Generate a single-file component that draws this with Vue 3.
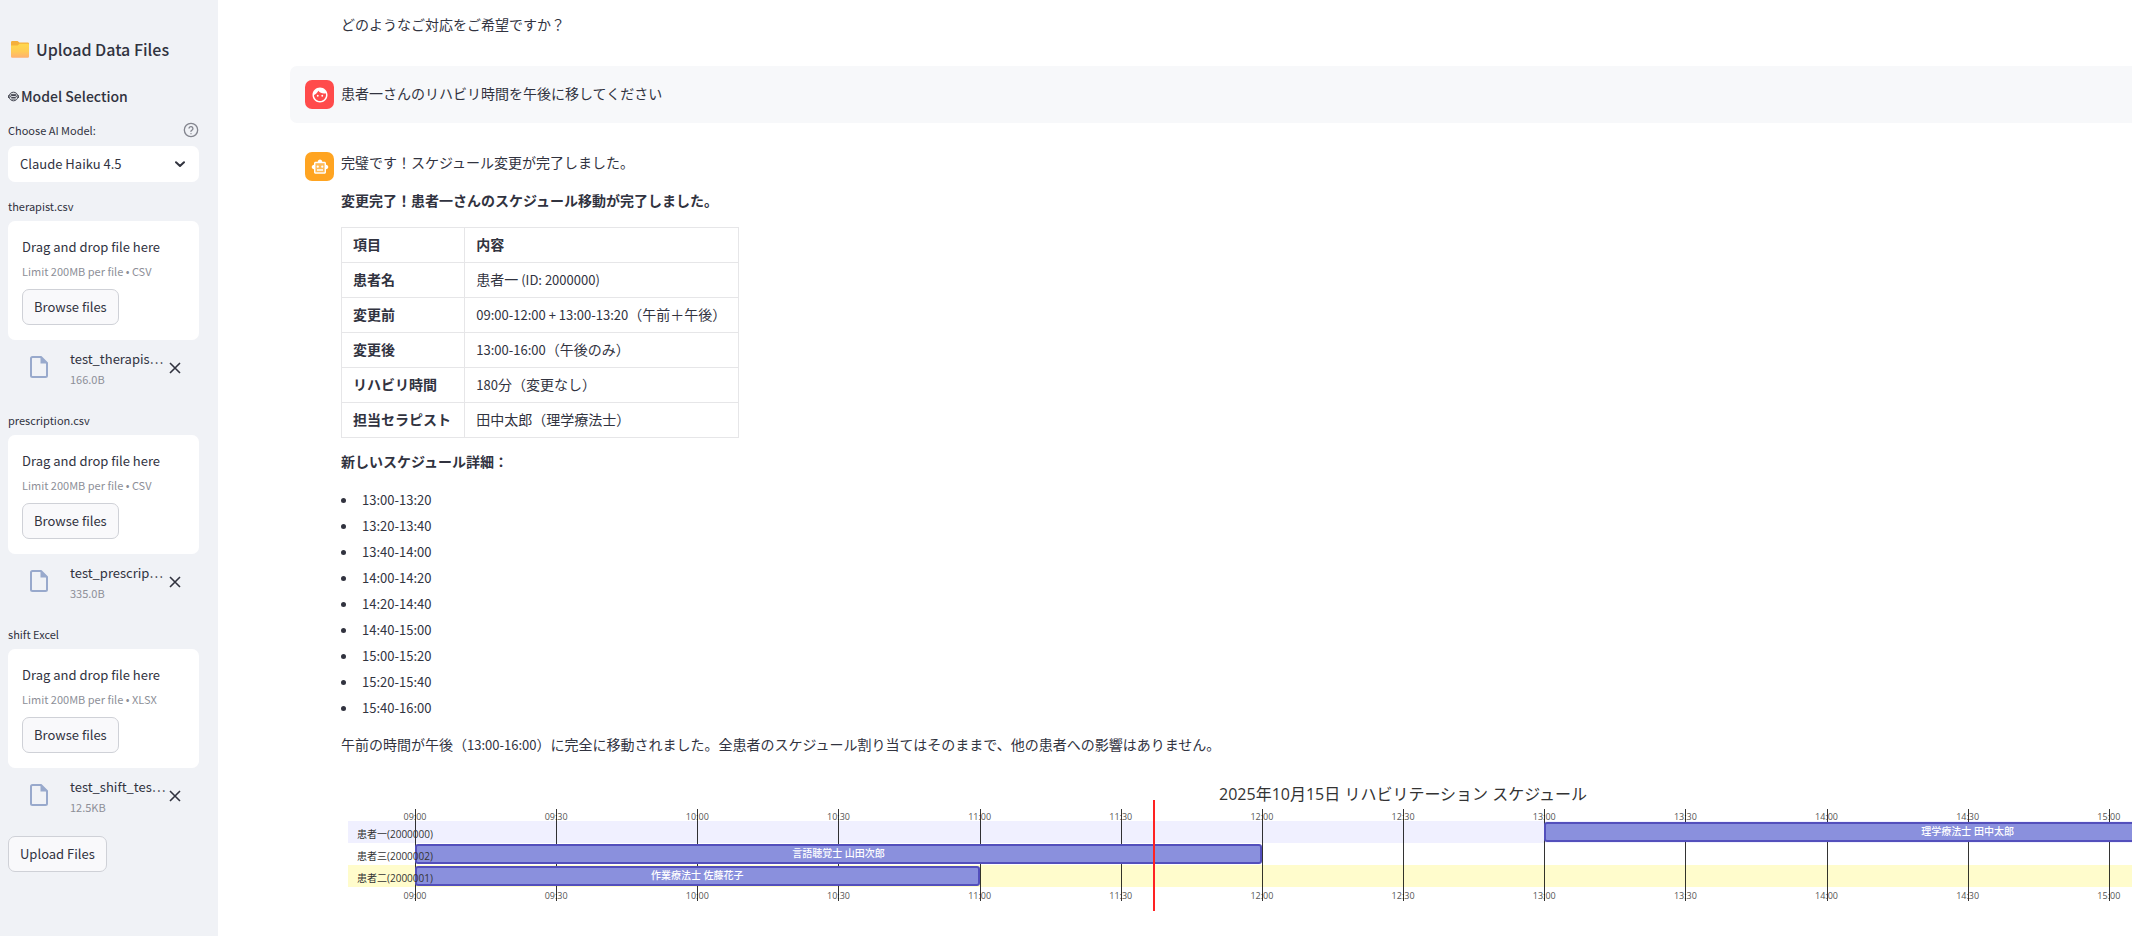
<script setup>
import { ref } from 'vue'

const model = ref('Claude Haiku 4.5')

const uploads = [
  { id: 'therapist', label: 'therapist.csv', type: 'CSV', file: 'test_therapis…', size: '166.0B' },
  { id: 'prescription', label: 'prescription.csv', type: 'CSV', file: 'test_prescrip…', size: '335.0B' },
  { id: 'shift', label: 'shift Excel', type: 'XLSX', file: 'test_shift_tes…', size: '12.5KB' },
]

// Each cell is a list of runs; runs flagged as latin use the smaller latin size.
const rows = [
  { key: '患者名', runs: [{ t: '患者一' }, { t: ' (ID: 2000000)', latin: true }] },
  { key: '変更前', runs: [{ t: '09:00-12:00 + 13:00-13:20', latin: true }, { t: '（午前＋午後）' }] },
  { key: '変更後', runs: [{ t: '13:00-16:00', latin: true }, { t: '（午後のみ）' }] },
  { key: 'リハビリ時間', runs: [{ t: '180', latin: true }, { t: '分（変更なし）' }] },
  { key: '担当セラピスト', runs: [{ t: '田中太郎（理学療法士）' }] },
]

const slots = [
  '13:00-13:20', '13:20-13:40', '13:40-14:00', '14:00-14:20', '14:20-14:40',
  '14:40-15:00', '15:00-15:20', '15:20-15:40', '15:40-16:00',
]

const DAY_START = 9
const DAY_HOURS = 7
const pct = (hour) => ((hour - DAY_START) / DAY_HOURS) * 100 + '%'
const span = (hours) => (hours / DAY_HOURS) * 100 + '%'

const ticks = Array.from({ length: 13 }, (_, i) => {
  const h = DAY_START + i / 2
  return { h, text: String(Math.floor(h)).padStart(2, '0') + (i % 2 ? ':30' : ':00') }
})

const sections = [
  { name: '患者一(2000000)', tone: 'lilac', from: 13, hours: 3, task: '理学療法士 田中太郎' },
  { name: '患者三(2000002)', tone: 'plain', from: 9, hours: 3, task: '言語聴覚士 山田次郎' },
  { name: '患者二(2000001)', tone: 'lemon', from: 9, hours: 2, task: '作業療法士 佐藤花子' },
]
const now = 11.615
</script>

<template>
  <div class="app">
    <aside class="sidebar">
      <h2 class="side-title">
        <svg width="20" height="20" viewBox="0 0 20 20" aria-hidden="true">
          <defs>
            <linearGradient id="folder" x1="0" y1="0" x2="0" y2="1">
              <stop offset="0" stop-color="#ffd84d" />
              <stop offset="0.55" stop-color="#ffcb55" />
              <stop offset="1" stop-color="#ffb070" />
            </linearGradient>
          </defs>
          <path d="M1 3.2Q1 2 2.2 2H7.6L9.4 3.6H17.8Q19 3.6 19 4.8V10H1z" fill="#f5b03c" />
          <path d="M1 6.4H7.6L9.4 4.8H17.8Q19 4.8 19 6V17.6Q19 18.8 17.8 18.8H2.2Q1 18.8 1 17.6z" fill="url(#folder)" />
        </svg>
        <span>Upload Data Files</span>
      </h2>
      <h3 class="side-subtitle">
        <svg width="11" height="11" viewBox="0 0 11 11" fill="none" stroke="#31333f" aria-hidden="true">
          <ellipse cx="5.5" cy="5.5" rx="4.4" ry="4.3" stroke-width="0.9" />
          <path d="M.5 4.2V7M10.5 4.2V7M2.6 3.4H8.4" stroke-width="0.8" />
          <rect x="2.6" y="4.4" width="5.8" height="2" rx="1" stroke-width="1" />
          <path d="M3.3 8H7.7" stroke-width="0.9" />
        </svg>
        <span>Model Selection</span>
      </h3>

      <div class="label-row">
        <label for="model">Choose AI Model:</label>
        <svg width="16" height="16" viewBox="0 0 24 24" fill="none" stroke="#83858e" stroke-width="2" stroke-linecap="round" stroke-linejoin="round" aria-hidden="true">
          <circle cx="12" cy="12" r="10" />
          <path d="M9.09 9a3 3 0 0 1 5.83 1c0 2-3 2.5-3 4M12 17.500h.01" />
        </svg>
      </div>
      <div class="select-box">
        <select id="model" v-model="model">
          <option>Claude Haiku 4.5</option>
        </select>
        <svg class="chevron" width="10" height="7" viewBox="0 0 10 7" fill="none" stroke="#31333f" stroke-width="2" aria-hidden="true">
          <path d="M1 1.2L5 5L9 1.2" stroke-linecap="round" stroke-linejoin="round" />
        </svg>
      </div>

      <section v-for="u in uploads" :key="u.id" class="upload">
        <label class="upload-label" :for="u.id">{{ u.label }}</label>
        <div class="dropzone">
          <span class="drop-text">Drag and drop file here</span>
          <span class="limit">Limit 200MB per file • {{ u.type }}</span>
          <input :id="u.id" class="file-input" type="file" tabindex="-1" />
          <button type="button" class="btn">Browse files</button>
        </div>
        <div class="file">
          <svg class="file-icon" width="18" height="22" viewBox="0 0 18 22" aria-hidden="true">
            <path d="M2.5 1H11L17 7V19.5Q17 21 15.5 21H2.5Q1 21 1 19.5V2.5Q1 1 2.5 1z" fill="none" stroke="#98a9cc" stroke-width="2" stroke-linejoin="round" />
            <path d="M10.5 1V7.5H17z" fill="#98a9cc" />
          </svg>
          <div class="file-info">
            <span class="file-name">{{ u.file }}</span>
            <span class="file-size">{{ u.size }}</span>
          </div>
          <button type="button" class="remove" :aria-label="'Remove ' + u.file">
            <svg width="12" height="12" viewBox="0 0 12 12" stroke="#31333f" stroke-width="1.6" aria-hidden="true">
              <path d="M1 1L11 11M11 1L1 11" />
            </svg>
          </button>
        </div>
      </section>

      <button type="button" class="btn upload-btn">Upload Files</button>
    </aside>

    <main class="main">
      <p class="previous">どのようなご対応をご希望ですか？</p>

      <div class="message user">
        <div class="avatar red">
          <svg width="18" height="18" viewBox="0 0 24 24" fill="#fff" aria-hidden="true">
            <path d="M10.25 13a1.25 1.25 0 1 1-2.5 0a1.25 1.25 0 1 1 2.5 0zM15 11.75a1.25 1.25 0 1 0 0 2.5a1.25 1.25 0 0 0 0-2.5zM22 12c0 5.52-4.48 10-10 10S2 17.52 2 12S6.48 2 12 2s10 4.48 10 10zM20 12c0-.78-.12-1.53-.33-2.24c-.7.15-1.42.24-2.17.24c-3.13 0-5.92-1.44-7.76-3.69C8.69 8.87 6.6 10.88 4 11.86c.01.04 0 .09 0 .14c0 4.41 3.59 8 8 8s8-3.59 8-8z" />
          </svg>
        </div>
        <p>患者一さんのリハビリ時間を午後に移してください</p>
      </div>

      <div class="message assistant">
        <div class="avatar orange">
          <svg width="18" height="18" viewBox="0 0 24 24" fill="#fff" aria-hidden="true">
            <path d="M6 7h12v12H6z" fill-opacity="0.25" />
            <path fill-rule="evenodd" d="M20 9V7c0-1.1-.9-2-2-2h-3c0-1.66-1.34-3-3-3S9 3.34 9 5H6c-1.1 0-2 .9-2 2v2c-1.66 0-3 1.34-3 3s1.34 3 3 3v4c0 1.1.9 2 2 2h12c1.1 0 2-.9 2-2v-4c1.66 0 3-1.34 3-3s-1.34-3-3-3zM18 19H6V7h12v12zM9 13a1.5 1.5 0 1 0 0-3a1.5 1.5 0 0 0 0 3zM15 13a1.5 1.5 0 1 0 0-3a1.5 1.5 0 0 0 0 3zM8 15h8v2H8z" />
          </svg>
        </div>
        <div class="answer">
          <p>完璧です！スケジュール変更が完了しました。</p>
          <p class="lead"><strong>変更完了！患者一さんのスケジュール移動が完了しました。</strong></p>

          <table>
            <thead>
              <tr><th scope="col">項目</th><th scope="col">内容</th></tr>
            </thead>
            <tbody>
              <tr v-for="r in rows" :key="r.key">
                <th scope="row">{{ r.key }}</th>
                <td><span v-for="(run, i) in r.runs" :key="i" :class="{ latin: run.latin }">{{ run.t }}</span></td>
              </tr>
            </tbody>
          </table>

          <p class="detail"><strong>新しいスケジュール詳細：</strong></p>
          <ul>
            <li v-for="s in slots" :key="s">{{ s }}</li>
          </ul>
          <p>午前の時間が午後（<span class="latin">13:00-16:00</span>）に完全に移動されました。全患者のスケジュール割り当てはそのままで、他の患者への影響はありません。</p>

          <figure class="gantt">
            <figcaption>2025年10月15日 リハビリテーション スケジュール</figcaption>
            <div class="plot">
              <div class="bands">
                <div v-for="s in sections" :key="s.name" class="band" :class="s.tone"></div>
              </div>
              <div class="axis">
                <div v-for="t in ticks" :key="t.h" class="tick" :style="{ left: pct(t.h) }">
                  <span>{{ t.text }}</span>
                  <span>{{ t.text }}</span>
                </div>
              </div>
              <div class="lanes">
                <div v-for="s in sections" :key="s.name" class="lane">
                  <div class="bar" :style="{ left: pct(s.from), width: span(s.hours) }">{{ s.task }}</div>
                </div>
                <div class="now" :style="{ left: pct(now) }"></div>
              </div>
              <div class="names">
                <span v-for="s in sections" :key="s.name">{{ s.name }}</span>
              </div>
            </div>
          </figure>
        </div>
      </div>
    </main>
  </div>
</template>

<style>
body {
  margin: 0;
  background: #fff;
}
</style>

<style scoped>
.app {
  display: flex;
  min-height: 100vh;
  overflow: hidden;
  color: #31333f;
  font-family: "Noto Sans CJK JP", "Noto Sans", sans-serif;
  font-size: 14px;
  line-height: 24px;
}

* {
  box-sizing: border-box;
}

p, h2, h3, ul, figure {
  margin: 0;
  padding: 0;
}

button, select {
  font: inherit;
  color: inherit;
}

/* Sidebar */
.sidebar {
  flex: none;
  width: 218px;
  padding: 37px 19px 0 8px;
  background: #f0f2f6;
  font-size: 13px;
}

.side-title {
  display: flex;
  align-items: center;
  gap: 6px;
  padding-left: 2px;
  font-size: 16px;
  font-weight: 500;
  line-height: 24px;
}

.side-subtitle {
  display: flex;
  align-items: center;
  gap: 2px;
  margin-top: 23px;
  font-size: 14px;
  font-weight: 500;
  line-height: 24px;
}

.label-row {
  display: flex;
  justify-content: space-between;
  align-items: center;
  margin-top: 14px;
  font-size: 11px;
  line-height: 16px;
}

.select-box {
  position: relative;
  margin-top: 8px;
}

.select-box select {
  display: block;
  width: 100%;
  height: 36px;
  padding: 0 12px;
  border: 0;
  border-radius: 7px;
  background: #fff;
  appearance: none;
}

.chevron {
  position: absolute;
  top: 15px;
  right: 14px;
  pointer-events: none;
}

.upload {
  margin-top: 16px;
}

.upload-label {
  display: block;
  font-size: 11px;
  line-height: 16px;
}

.dropzone {
  display: flex;
  flex-direction: column;
  align-items: flex-start;
  height: 119px;
  margin-top: 7px;
  padding: 14px;
  border-radius: 7px;
  background: #fff;
}

.drop-text {
  line-height: 24px;
}

.limit {
  margin-top: 4px;
  color: #8d8f98;
  font-size: 11px;
  line-height: 16px;
}

.file-input {
  position: absolute;
  width: 1px;
  height: 1px;
  opacity: 0;
}

.btn {
  height: 36px;
  padding: 0 11px;
  border: 1px solid #cfd1d7;
  border-radius: 7px;
  background: #f9f9fb;
}

.dropzone .btn {
  margin-top: 10px;
}

.file {
  display: flex;
  align-items: center;
  height: 56px;
  padding-left: 22px;
}

.file-icon {
  flex: none;
  margin-bottom: 2px;
}

.file-info {
  display: flex;
  flex-direction: column;
  width: 96px;
  margin-left: 22px;
}

.file-name {
  line-height: 22px;
  white-space: nowrap;
}

.file-size {
  color: #8d8f98;
  font-size: 11px;
  line-height: 18px;
}

.remove {
  display: flex;
  margin-left: 3px;
  padding: 0;
  border: 0;
  background: none;
}

.upload-btn {
  margin-top: 12px;
}

/* Conversation */
.main {
  flex: 1;
  min-width: 0;
  padding: 12px 0 24px 72px;
}

.previous {
  padding-left: 51px;
}

.message {
  display: flex;
  gap: 7px;
  padding: 14px 0 14px 15px;
}

.user {
  margin-top: 30px;
  border-radius: 7px 0 0 7px;
  background: #f7f8fa;
}

.user p {
  line-height: 26px;
}

.assistant {
  margin-top: 13px;
}

.avatar {
  display: flex;
  flex: none;
  align-items: center;
  justify-content: center;
  width: 29px;
  height: 29px;
  border-radius: 7px;
}

.red {
  background: #ff4b4b;
}

.orange {
  margin-top: 2px;
  background: #ffa421;
}

.answer {
  flex: 1;
  min-width: 0;
}

.lead {
  margin-top: 14px;
}

.latin {
  font-size: 13px;
  white-space: pre;
}

table {
  width: 398px;
  margin-top: 15px;
  border-collapse: collapse;
}

th, td {
  height: 35px;
  padding: 0 11px 2px;
  border: 1px solid #e6e6e8;
  text-align: left;
  white-space: nowrap;
}

th {
  width: 123px;
}

.detail {
  margin-top: 11px;
}

ul {
  margin: 14px 0 11px;
  font-size: 13px;
  line-height: 26px;
  list-style: none;
}

li {
  display: flex;
  align-items: center;
  gap: 16px;
}

li::before {
  width: 5px;
  height: 5px;
  border-radius: 50%;
  background: #31333f;
  content: "";
}

/* The chart is wider than the column and runs off the right edge. */
.gantt {
  width: 118.6%;
  margin-top: 25px;
  color: #333;
  font-family: "Open Sans", "Noto Sans CJK JP", sans-serif;
}

.gantt figcaption {
  font-size: 16px;
  line-height: 24px;
  text-align: center;
}

.plot {
  position: relative;
  height: 105px;
}

.bands {
  position: absolute;
  top: 15px;
  right: 37px;
  left: 7px;
}

.band {
  height: 22px;
}

.lilac {
  background: #f0f0ff;
}

.lemon {
  background: #fffccc;
}

.axis {
  position: absolute;
  top: 3px;
  right: 74px;
  left: 74px;
  height: 92px;
}

.tick {
  position: absolute;
  top: 0;
  bottom: 0;
  display: flex;
  flex-direction: column;
  justify-content: space-between;
  align-items: center;
  width: 0;
  padding-top: 3px;
  color: #555;
  font-size: 9px;
  line-height: 10px;
}

.tick::before {
  position: absolute;
  top: 0;
  bottom: 0;
  left: 0;
  width: 1px;
  background: rgba(0, 0, 0, 0.8);
  content: "";
}

.lanes {
  position: absolute;
  top: 15px;
  right: 74px;
  left: 74px;
}

.lane {
  position: relative;
  height: 22px;
}

.bar {
  position: absolute;
  top: 1px;
  height: 20px;
  border: 2px solid #534fbc;
  border-radius: 3px;
  background: #8a90dd;
  color: #fff;
  font-size: 10px;
  font-weight: 500;
  line-height: 15px;
  text-align: center;
}

.now {
  position: absolute;
  top: -21px;
  width: 2px;
  height: 111px;
  background: #f22;
}

.names {
  position: absolute;
  top: 17px;
  left: 16px;
  display: flex;
  flex-direction: column;
  font-size: 10px;
  line-height: 22px;
}
</style>
